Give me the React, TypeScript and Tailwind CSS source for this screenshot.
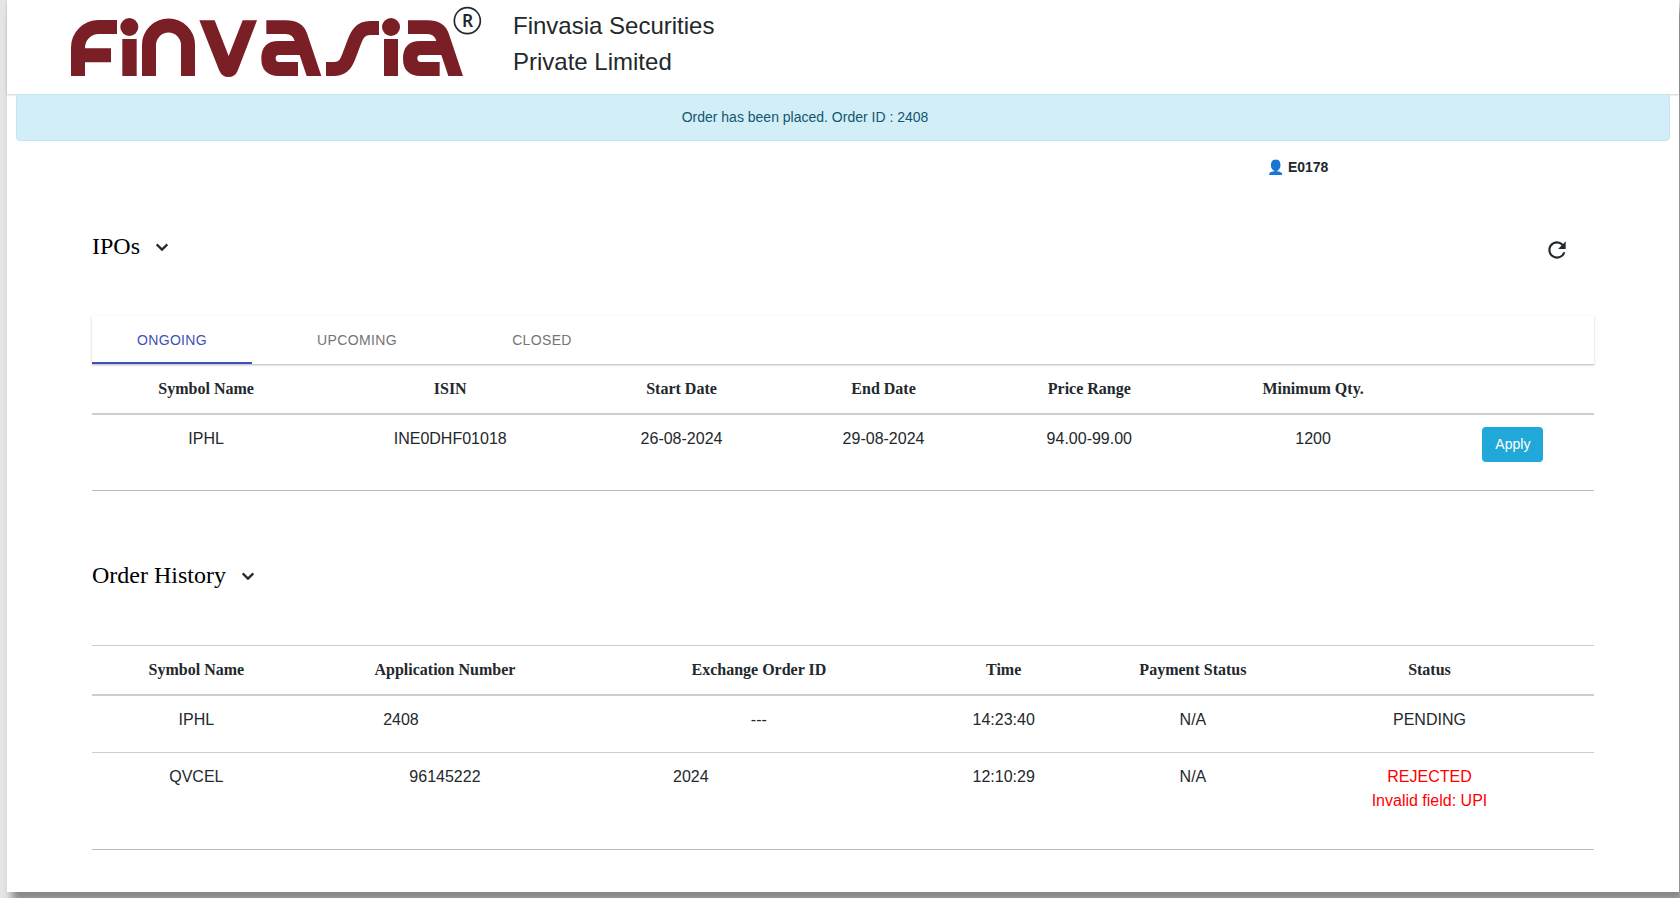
import { useState } from 'react'
import clsx from 'clsx'
import { MdRefresh } from 'react-icons/md'

interface Ipo {
  symbol: string
  isin: string
  startDate: string
  endDate: string
  priceRange: string
  minQty: number
}

interface Order {
  symbol: string
  applicationNumber: string
  exchangeOrderId: string
  time: string
  paymentStatus: string
  status: string
  reason?: string
}

const TABS = ['Ongoing', 'Upcoming', 'Closed']

const ipos: Ipo[] = [
  {
    symbol: 'IPHL',
    isin: 'INE0DHF01018',
    startDate: '26-08-2024',
    endDate: '29-08-2024',
    priceRange: '94.00-99.00',
    minQty: 1200,
  },
]

const orders: Order[] = [
  {
    symbol: 'IPHL',
    applicationNumber: '2408',
    exchangeOrderId: '---',
    time: '14:23:40',
    paymentStatus: 'N/A',
    status: 'PENDING',
  },
  {
    symbol: 'QVCEL',
    applicationNumber: '96145222',
    exchangeOrderId: '2024',
    time: '12:10:29',
    paymentStatus: 'N/A',
    status: 'REJECTED',
    reason: 'Invalid field: UPI',
  },
]

const thClass = 'border-t border-b-2 border-[#c8ced3] p-3 text-center font-["Liberation_Serif",serif] font-bold'

function Logo() {
  const a =
    'M799 61H857Q907 61 921 100L964 228H920L899 165H837Q827 165 827 175Q827 186 837 186H894V228H836Q784 226 784 176Q784 123 836 123H884Q878 102 857 102H799Z'

  return (
    <svg viewBox="210 18 1242 216" className="h-[72px] w-[414px] shrink-0" role="img" aria-label="Finvasia">
      <g fill="#7a1f26">
        <circle cx="388" cy="81" r="27" />
        <rect x="367" y="117" width="43" height="111" />
        <path d="M598 61H644L686 168L728 61H771L713 212Q705 231 685 231Q667 231 658 212Z" />
        <path d={a} />
        <circle cx="1173" cy="81" r="27" />
        <rect x="1152" y="117" width="42" height="111" />
        <path d={a} transform="translate(425 0)" />
      </g>
      <g fill="none" stroke="#7a1f26" strokeWidth="42">
        <path d="M234 228V143A62 62 0 0 1 296 81H351M250 166H333" />
        <path d="M447 228V135A58 58 0 0 1 564 135V228" />
        <path d="M978 207H1003C1032 207 1041 186 1050 160L1062 128C1071 103 1082 84 1110 84H1137" />
      </g>
      <circle cx="1402" cy="62" r="39" fill="none" stroke="#23282c" strokeWidth="5" />
      <text x="1403" y="80" textAnchor="middle" fill="#23282c" className='font-["Noto_Sans",sans-serif] text-[52px] font-semibold'>
        R
      </text>
    </svg>
  )
}

function SectionTitle({ title, open, onToggle }: { title: string; open: boolean; onToggle: () => void }) {
  return (
    <h4 className='h-9 font-["Liberation_Serif",serif] text-2xl leading-9 text-black'>
      <button type="button" aria-expanded={open} onClick={onToggle} className="flex items-center gap-2.5">
        {title}
        <svg viewBox="0 0 24 24" className="size-6" fill="none" stroke="#23282c" strokeWidth="2.2" aria-hidden="true">
          <path d="M6.7 10.4L12 15.6L17.3 10.4" />
        </svg>
      </button>
    </h4>
  )
}

function IpoTable() {
  return (
    <table className="w-full table-fixed border-collapse">
      <colgroup>
        <col className="w-[15.2%]" />
        <col className="w-[17.3%]" />
        <col className="w-[13.5%]" />
        <col className="w-[13.4%]" />
        <col className="w-[14%]" />
        <col className="w-[15.8%]" />
        <col />
      </colgroup>
      <thead>
        <tr>
          <th className={thClass}>Symbol Name</th>
          <th className={thClass}>ISIN</th>
          <th className={thClass}>Start Date</th>
          <th className={thClass}>End Date</th>
          <th className={thClass}>Price Range</th>
          <th className={thClass}>Minimum Qty.</th>
          <th className={thClass}></th>
        </tr>
      </thead>
      <tbody>
        {ipos.map((ipo) => (
          <tr key={ipo.symbol} className="h-[76px] text-center align-top">
            <td className="p-3">{ipo.symbol}</td>
            <td className="p-3">{ipo.isin}</td>
            <td className="p-3">{ipo.startDate}</td>
            <td className="p-3">{ipo.endDate}</td>
            <td className="p-3">{ipo.priceRange}</td>
            <td className="p-3">{ipo.minQty}</td>
            <td className="p-3">
              <button
                type="button"
                className="block mx-auto rounded-sm bg-[#20a8d8] px-[13px] py-[7px] text-sm leading-[21px] text-white hover:bg-[#1b8eb7]"
              >
                Apply
              </button>
            </td>
          </tr>
        ))}
      </tbody>
    </table>
  )
}

function OrderTable() {
  return (
    <table className="w-full table-fixed border-collapse">
      <colgroup>
        <col className="w-[13.9%]" />
        <col className="w-[19.2%]" />
        <col className="w-[22.6%]" />
        <col className="w-[10%]" />
        <col className="w-[15.2%]" />
        <col className="w-[16.3%]" />
        <col />
      </colgroup>
      <thead>
        <tr>
          <th className={thClass}>Symbol Name</th>
          <th className={thClass}>Application Number</th>
          <th className={thClass}>Exchange Order ID</th>
          <th className={thClass}>Time</th>
          <th className={thClass}>Payment Status</th>
          <th className={thClass}>Status</th>
          <th className={thClass}></th>
        </tr>
      </thead>
      <tbody>
        {orders.map((order) => (
          <tr
            key={order.symbol}
            className={clsx('border-t border-[#c8ced3] text-center align-top', order.reason ? 'h-[97px]' : 'h-[57px]')}
          >
            <td className="p-3">{order.symbol}</td>
            <td className="p-3">
              <span className={clsx(order.applicationNumber === '2408' && 'pr-22')}>{order.applicationNumber}</span>
            </td>
            <td className="p-3">
              <span className={clsx(order.exchangeOrderId === '2024' && 'pr-34')}>{order.exchangeOrderId}</span>
            </td>
            <td className="p-3">{order.time}</td>
            <td className="p-3">{order.paymentStatus}</td>
            <td className={clsx('p-3', order.status === 'REJECTED' && 'text-[#ff0000]')}>
              {order.status}
              {order.reason && <div>{order.reason}</div>}
            </td>
            <td></td>
          </tr>
        ))}
      </tbody>
    </table>
  )
}

function App() {
  const [activeTab, setActiveTab] = useState('Ongoing')
  const [showIpos, setShowIpos] = useState(true)
  const [showOrders, setShowOrders] = useState(true)

  return (
    <div className='min-h-screen overflow-hidden bg-[#e4e5e6] pr-px pb-1.5 pl-[7px] font-["Liberation_Sans",Arial,sans-serif] text-base text-[#23282c]'>
      <div className="bg-white pb-[42px] shadow-[5px_10px_8px_#888888]">
        <header className="flex h-[94px] gap-[29px] pt-1.5 pl-[63px] shadow-[0_1px_2px_rgba(0,0,0,0.2)]">
          <Logo />
          <h1 className="pt-0.5 text-2xl leading-9">
            Finvasia Securities
            <br />
            Private Limited
          </h1>
        </header>

        <div
          role="alert"
          className="relative mx-[9px] rounded-sm border border-[#c1e7f4] bg-[#d2eef7] py-3 pr-24 pl-5 text-center text-sm leading-[21px] text-[#115770]"
        >
          Order has been placed. Order ID : 2408
        </div>

        <div className="mt-4 ml-[75%] pl-1.5 text-sm leading-[21px] font-bold">👤 E0178</div>

        <main className="mx-[85px] mt-[50px]">
          <section>
            <div className="flex items-start justify-between pr-6">
              <SectionTitle title="IPOs" open={showIpos} onToggle={() => setShowIpos(!showIpos)} />
              <button type="button" aria-label="Refresh" className="flex h-11 items-center">
                <MdRefresh className="size-[26px]" />
              </button>
            </div>
            {showIpos && (
              <div className="mt-11 border-b border-[#b9bfc0]">
                <div
                  role="tablist"
                  className="flex h-12 gap-[25px] shadow-[0_2px_1px_-1px_rgba(0,0,0,0.2),0_1px_1px_rgba(0,0,0,0.14),0_1px_3px_rgba(0,0,0,0.12)]"
                >
                  {TABS.map((tab) => (
                    <button
                      key={tab}
                      type="button"
                      role="tab"
                      aria-selected={tab === activeTab}
                      onClick={() => setActiveTab(tab)}
                      className={clsx(
                        'w-40 border-y-2 border-t-transparent text-sm tracking-wide uppercase',
                        tab === activeTab ? 'border-b-[#3f51b5] text-[#3f51b5]' : 'border-b-transparent text-[#757575]'
                      )}
                    >
                      {tab}
                    </button>
                  ))}
                </div>
                <IpoTable />
              </div>
            )}
          </section>

          <section className="mt-[66px]">
            <SectionTitle title="Order History" open={showOrders} onToggle={() => setShowOrders(!showOrders)} />
            {showOrders && (
              <div className="mt-[52px] border-b border-[#b9bfc0]">
                <OrderTable />
              </div>
            )}
          </section>
        </main>
      </div>
    </div>
  )
}

export default App
